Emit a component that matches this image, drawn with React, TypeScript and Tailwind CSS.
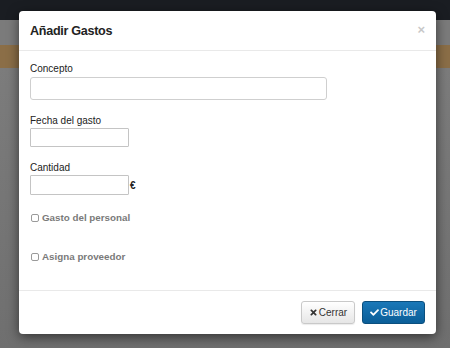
import { FaTimes, FaCheck } from "react-icons/fa";

const font = { fontFamily: '"Liberation Sans", Arial, sans-serif' };

const Checkbox = ({ label }: { label: string }) => (
  <label className="flex items-center h-[12px] ml-[1px]">
    <span className="w-[8px] h-[8px] rounded-[2px] border border-[#9a9a9a] bg-white mr-[3px]" />
    <span className="text-[9.8px] font-bold text-[#7a7a7a] leading-none">{label}</span>
  </label>
);

export default function App() {
  return (
    <div className="relative w-[450px] h-[348px] overflow-hidden bg-[#7b7b7b]" style={font}>
      <div className="h-[20px] bg-[#1a1d22]" />
      <div className="h-[25px]" />
      <div className="h-[23px] bg-[#8b6e47]" />
      <div className="h-[280px] bg-gradient-to-b from-[#7c7c7c] to-[#6f6f6f]" />

      {/* modal */}
      <div className="absolute left-[19px] top-[11px] w-[417px] h-[323px] bg-white rounded-[4px] shadow-[0_3px_12px_rgba(0,0,0,0.55)] flex flex-col">
        <div className="h-[40px] flex items-center justify-between pl-[11px] pr-[11px] border-b border-[#e9e9e9]">
          <h4 className="text-[12.6px] font-bold text-[#222] tracking-[-0.3px] mt-[2px]">Añadir Gastos</h4>
          <span className="text-[13px] font-bold text-[#c8c8c8] leading-none mt-[-2px]">×</span>
        </div>

        <div className="flex-1 px-[11px] pt-[12px] border-b border-[#e9e9e9]">
          <div className="text-[10px] leading-[12px] text-[#222] mb-[2px]">Concepto</div>
          <div className="w-[297px] h-[23px] border border-[#cfcfcf] rounded-[3px]" />

          <div className="text-[10px] leading-[12px] text-[#222] mt-[15px] mb-[1px]">Fecha del gasto</div>
          <div className="w-[99px] h-[19px] border border-[#c4c4c4] rounded-[1px]" />

          <div className="text-[10px] leading-[12px] text-[#222] mt-[15px] mb-[1px]">Cantidad</div>
          <div className="flex items-center">
            <div className="w-[99px] h-[20px] border border-[#c4c4c4] rounded-[1px]" />
            <span className="text-[10px] font-bold text-[#222] ml-[1px]">€</span>
          </div>

          <div className="mt-[17px]">
            <Checkbox label="Gasto del personal" />
          </div>
          <div className="mt-[27px]">
            <Checkbox label="Asigna proveedor" />
          </div>
        </div>

        <div className="h-[43px] flex items-center justify-end gap-[7px] pr-[11px]">
          <button className="h-[23px] w-[54px] flex items-center justify-center rounded-[3px] border border-[#c9c9c9] bg-gradient-to-b from-white to-[#e6e6e6] text-[10px] text-[#333] shadow-[0_1px_1px_rgba(0,0,0,0.08)]">
            <FaTimes className="w-[9px] h-[9px] mr-[1px]" />
            Cerrar
          </button>
          <button className="h-[23px] w-[63px] flex items-center justify-center rounded-[3px] border border-[#0b4f7e] bg-gradient-to-b from-[#1a78b8] to-[#0b5e98] text-[10px] text-white">
            <FaCheck className="w-[9px] h-[9px] mr-[1px]" />
            Guardar
          </button>
        </div>
      </div>
    </div>
  );
}
